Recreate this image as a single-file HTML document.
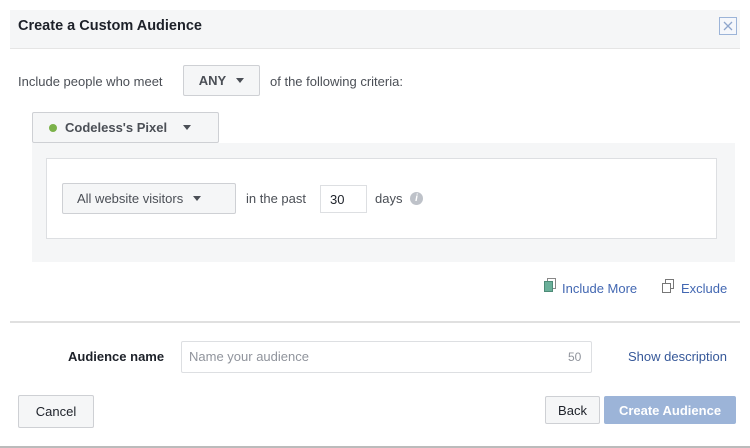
<!DOCTYPE html>
<html><head><meta charset="utf-8"><style>
*{box-sizing:border-box;margin:0;padding:0}
body{width:750px;height:448px;background:#fff;font-family:"Liberation Sans",Arial,sans-serif;color:#1d2129;position:relative;overflow:hidden;font-size:13px}
.a{position:absolute}
.btn{position:absolute;background:#f5f6f7;border:1px solid #ced0d4;border-radius:2px;font-weight:bold;color:#4b4f56;display:flex;align-items:center;font-size:13px}
.tri{display:inline-block;width:0;height:0;border-left:4.5px solid transparent;border-right:4.5px solid transparent;border-top:5px solid #4b4f56;margin-left:10px}
a{color:#4267b2;text-decoration:none}
</style></head><body>
<div class="a" style="left:10px;top:10px;width:730px;height:39px;background:#f5f6f7;border-bottom:1px solid #e5e5e5"></div>
<div class="a" style="left:18px;top:18px;font-size:14.5px;font-weight:bold;color:#1d2129">Create a Custom Audience</div>
<div class="a" style="left:719px;top:17px;width:18px;height:18px;border:1px solid #9cb4d8;background:#f5f7fb"><svg width="16" height="16"><path d="M4 4L12 12M12 4L4 12" stroke="#8fa6cc" stroke-width="1.3"/></svg></div>

<div class="a" style="left:18px;top:74px;color:#4b4f56">Include people who meet</div>
<div class="btn" style="left:183px;top:65px;width:77px;height:31px;justify-content:center">ANY<span class="tri"></span></div>
<div class="a" style="left:270px;top:74px;color:#4b4f56">of the following criteria:</div>

<div class="btn" style="left:32px;top:112px;width:187px;height:31px;padding-left:16px"><span style="width:8px;height:8px;border-radius:50%;background:#7bb24a;margin-right:8px"></span>Codeless's Pixel<span class="tri" style="margin-left:16px"></span></div>
<div class="a" style="left:32px;top:143px;width:703px;height:119px;background:#f5f6f7"></div>
<div class="a" style="left:46px;top:158px;width:671px;height:81px;background:#fff;border:1px solid #dddfe2"></div>
<div class="btn" style="left:62px;top:183px;width:174px;height:31px;padding-left:14px;font-weight:normal;color:#4b4f56">All website visitors<span class="tri"></span></div>
<div class="a" style="left:246px;top:191px;color:#4b4f56">in the past</div>
<div class="a" style="left:320px;top:185px;width:47px;height:28px;border:1px solid #dddfe2;padding:6px 0 0 9px;color:#1d2129">30</div>
<div class="a" style="left:375px;top:191px;color:#4b4f56">days</div>
<div class="a" style="left:410px;top:192px;width:13px;height:13px;border-radius:50%;background:#bec2c9;color:#fff;font-size:10px;font-weight:bold;text-align:center;line-height:13px;font-style:italic">i</div>

<div class="a" style="left:544px;top:281px;width:9px;height:11px;background:#6bb09a;border:1px solid #4d8b77"></div>
<div class="a" style="left:547px;top:278px;width:9px;height:11px;background:#fff;border:1px solid #888;z-index:-1"></div>
<a class="a" style="left:562px;top:281px">Include More</a>
<div class="a" style="left:665px;top:279px;width:9px;height:10px;background:#fff;border:1px solid #777"></div>
<div class="a" style="left:662px;top:283px;width:9px;height:10px;background:#fff;border:1px solid #777"></div>
<a class="a" style="left:681px;top:281px">Exclude</a>

<div class="a" style="left:10px;top:321px;width:730px;height:2px;background:#e0e0e0"></div>
<div class="a" style="left:68px;top:349px;font-weight:bold;color:#1d2129">Audience name</div>
<div class="a" style="left:181px;top:341px;width:411px;height:32px;border:1px solid #dddfe2;border-radius:2px"></div>
<div class="a" style="left:189px;top:349px;color:#90949c">Name your audience</div>
<div class="a" style="left:568px;top:350px;color:#90949c;font-size:12px">50</div>
<a class="a" style="left:628px;top:349px;color:#365899">Show description</a>

<div class="btn" style="left:18px;top:395px;width:76px;height:33px;justify-content:center;font-weight:normal;color:#1d2129">Cancel</div>
<div class="btn" style="left:545px;top:396px;width:55px;height:28px;justify-content:center;font-weight:normal;color:#1d2129">Back</div>
<div class="btn" style="left:604px;top:396px;width:132px;height:28px;justify-content:center;background:#9cb4d8;border-color:#9cb4d8;color:#fff">Create Audience</div>
<div class="a" style="left:0;top:446px;width:750px;height:2px;background:#bbb"></div>
</body></html>
